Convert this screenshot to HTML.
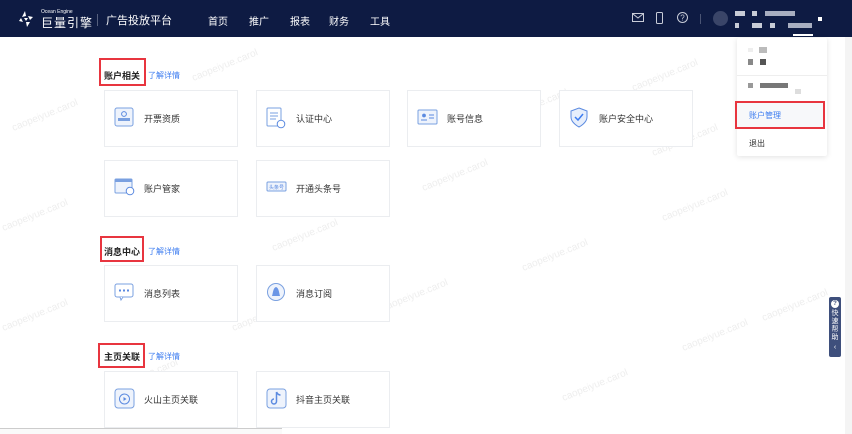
<!DOCTYPE html>
<html><head><meta charset="utf-8"><style>
*{margin:0;padding:0;box-sizing:border-box}
body{width:852px;height:434px;overflow:hidden;background:#fff;font-family:"Liberation Sans","Noto Sans CJK SC",sans-serif;position:relative;color:#333}
.hdr{position:absolute;left:0;top:0;width:852px;height:37px;background:#0e1b43}
.a{position:absolute}
.nav{color:#fff;font-size:10px;top:13px}
.card{position:absolute;width:134px;height:57px;border:1px solid #ebedf0;background:#fff}
.card .t{position:absolute;left:39px;top:21px;font-size:9px;color:#333}
.card svg{position:absolute;left:9px;top:16px}
.sec{position:absolute;font-size:9px;font-weight:bold;color:#222}
.lk{position:absolute;font-size:8px;color:#3c7cf0}
.red{position:absolute;border:2px solid #e8353f}
.wm{position:absolute;color:#eeeeee;font-size:10px;transform:rotate(-22deg);white-space:nowrap}
.blk{position:absolute;background:#999}
</style></head><body>
<div class="wm" style="left:10px;top:110px">caopeiyue.carol</div>
<div class="wm" style="left:190px;top:60px">caopeiyue.carol</div>
<div class="wm" style="left:280px;top:125px">caopeiyue.carol</div>
<div class="wm" style="left:420px;top:170px">caopeiyue.carol</div>
<div class="wm" style="left:500px;top:100px">caopeiyue.carol</div>
<div class="wm" style="left:630px;top:70px">caopeiyue.carol</div>
<div class="wm" style="left:650px;top:135px">caopeiyue.carol</div>
<div class="wm" style="left:0px;top:210px">caopeiyue.carol</div>
<div class="wm" style="left:270px;top:230px">caopeiyue.carol</div>
<div class="wm" style="left:380px;top:290px">caopeiyue.carol</div>
<div class="wm" style="left:520px;top:250px">caopeiyue.carol</div>
<div class="wm" style="left:660px;top:200px">caopeiyue.carol</div>
<div class="wm" style="left:760px;top:300px">caopeiyue.carol</div>
<div class="wm" style="left:0px;top:310px">caopeiyue.carol</div>
<div class="wm" style="left:230px;top:310px">caopeiyue.carol</div>
<div class="wm" style="left:110px;top:370px">caopeiyue.carol</div>
<div class="wm" style="left:560px;top:380px">caopeiyue.carol</div>
<div class="wm" style="left:680px;top:330px">caopeiyue.carol</div>

<div class="hdr"></div>
<svg class="a" style="left:17px;top:10px" width="18" height="18" viewBox="0 0 18 18"><path d="M8 1 L5 7 L9 6Z M16 7 L11 6 L13 10Z M10 17 L13 12 L9 12Z M2 11 L6 12 L4 8Z M7 8 L11 8 L9 11Z" fill="#fff"/></svg>
<div class="a" style="left:41px;top:9px;color:#fff;font-size:5px">Ocean Engine</div>
<div class="a" style="left:41px;top:14px;color:#fff;font-size:12px;letter-spacing:1px">巨量引擎</div>
<div class="a" style="left:97px;top:14px;width:1px;height:12px;background:#56607e"></div>
<div class="a" style="left:106px;top:12px;color:#fff;font-size:11px">广告投放平台</div>
<div class="a nav" style="left:208px">首页</div>
<div class="a nav" style="left:249px">推广</div>
<div class="a nav" style="left:290px">报表</div>
<div class="a nav" style="left:329px">财务</div>
<div class="a nav" style="left:370px">工具</div>
<svg class="a" style="left:632px;top:13px" width="12" height="10"><rect x="0.5" y="0.5" width="11" height="8" fill="none" stroke="#c8ccd8"/><path d="M1 1 L6 5 L11 1" fill="none" stroke="#c8ccd8"/></svg>
<svg class="a" style="left:656px;top:12px" width="7" height="12"><rect x="0.5" y="0.5" width="6" height="11" rx="1" fill="none" stroke="#c8ccd8"/></svg>
<svg class="a" style="left:677px;top:12px" width="11" height="11"><circle cx="5.5" cy="5.5" r="5" fill="none" stroke="#c8ccd8"/><text x="3.3" y="8.5" font-size="8" fill="#c8ccd8" font-family="Liberation Sans">?</text></svg>
<div class="a" style="left:700px;top:14px;width:1px;height:10px;background:#4a5474"></div>
<div class="a" style="left:713px;top:11px;width:15px;height:15px;border-radius:50%;background:#3a4568"></div>
<div class="blk" style="left:735px;top:11px;width:10px;height:5px;background:#c8ccd6"></div>
<div class="blk" style="left:752px;top:11px;width:5px;height:5px;background:#c8ccd6"></div>
<div class="blk" style="left:765px;top:11px;width:30px;height:5px;background:#a8aec0"></div>
<div class="blk" style="left:735px;top:23px;width:4px;height:5px;background:#c8ccd6"></div>
<div class="blk" style="left:752px;top:23px;width:10px;height:5px;background:#c8ccd6"></div>
<div class="blk" style="left:770px;top:23px;width:5px;height:5px;background:#c8ccd6"></div>
<div class="blk" style="left:788px;top:23px;width:24px;height:5px;background:#a8aec0"></div>
<div class="blk" style="left:818px;top:17px;width:4px;height:4px;background:#fff"></div>

<div class="a" style="left:845px;top:37px;width:7px;height:397px;background:#f4f4f4"></div>

<div class="sec" style="left:104px;top:69px">账户相关</div><div class="lk" style="left:148px;top:70px">了解详情</div>
<div class="red" style="left:99px;top:58px;width:47px;height:28px"></div>

<div class="card" style="left:104px;top:90px"><svg width="20" height="20"><rect x="1" y="1" width="18" height="18" rx="2" fill="#eef3fc" stroke="#7aa0e0"/><circle cx="10" cy="7" r="2.4" fill="none" stroke="#5b8ae0"/><rect x="4" y="11" width="12" height="3" fill="#7aa0e0"/></svg><div class="t">开票资质</div></div>
<div class="card" style="left:256px;top:90px"><svg width="20" height="22"><rect x="1" y="1" width="14" height="18" rx="1" fill="none" stroke="#7aa0e0"/><path d="M4 6h8M4 9h8M4 12h6" stroke="#7aa0e0"/><circle cx="15" cy="17" r="3.8" fill="#fff" stroke="#5b8ae0"/></svg><div class="t">认证中心</div></div>
<div class="card" style="left:407px;top:90px"><svg width="22" height="20"><rect x="1" y="3" width="19" height="14" rx="1" fill="#eef3fc" stroke="#7aa0e0"/><circle cx="7" cy="8.5" r="1.9" fill="#5b8ae0"/><path d="M4 13h6M12 8h5M12 11h5" stroke="#5b8ae0"/></svg><div class="t">账号信息</div></div>
<div class="card" style="left:559px;top:90px"><svg width="20" height="22"><path d="M10 1 L18 4 V10 C18 16 10 20 10 20 C10 20 2 16 2 10 V4Z" fill="#e6eefc" stroke="#5b8ae0"/><path d="M6 10 L9 13 L14 7" fill="none" stroke="#3c7cf0" stroke-width="1.5"/></svg><div class="t">账户安全中心</div></div>
<div class="card" style="left:104px;top:160px"><svg width="22" height="20"><rect x="1" y="2" width="17" height="14" rx="1" fill="#eef3fc" stroke="#7aa0e0"/><rect x="1" y="2" width="17" height="3" fill="#7aa0e0"/><circle cx="16" cy="14" r="3.8" fill="#fff" stroke="#5b8ae0"/></svg><div class="t">账户管家</div></div>
<div class="card" style="left:256px;top:160px"><svg width="22" height="20"><rect x="1" y="5" width="19" height="9" rx="1" fill="#eef3fc" stroke="#7aa0e0"/><text x="3" y="12" font-size="5" fill="#5b8ae0">头条号</text></svg><div class="t">开通头条号</div></div>

<div class="sec" style="left:104px;top:245px">消息中心</div><div class="lk" style="left:148px;top:246px">了解详情</div>
<div class="red" style="left:100px;top:236px;width:44px;height:26px"></div>
<div class="card" style="left:104px;top:265px"><svg width="22" height="22"><rect x="1" y="2" width="18" height="13" rx="2" fill="none" stroke="#7aa0e0"/><path d="M6 15 L7 18 L9 15" fill="#fff" stroke="#7aa0e0"/><path d="M5 8.5h2M9 8.5h2M13 8.5h2" stroke="#5b8ae0" stroke-width="2"/></svg><div class="t">消息列表</div></div>
<div class="card" style="left:256px;top:265px"><svg width="22" height="22"><circle cx="10" cy="10" r="8.5" fill="#eef3fc" stroke="#7aa0e0"/><path d="M6 14 C7 11 7 6 10 5 C13 6 13 11 14 14Z" fill="#6b96e6"/></svg><div class="t">消息订阅</div></div>

<div class="sec" style="left:104px;top:350px">主页关联</div><div class="lk" style="left:148px;top:351px">了解详情</div>
<div class="red" style="left:98px;top:343px;width:47px;height:25px"></div>
<div class="card" style="left:104px;top:371px"><svg width="22" height="22"><rect x="1" y="1" width="19" height="19" rx="3" fill="#eef3fc" stroke="#7aa0e0"/><circle cx="10.5" cy="11" r="5" fill="none" stroke="#5b8ae0"/><path d="M9.5 9 L12.5 11 L9.5 13Z" fill="#5b8ae0"/></svg><div class="t">火山主页关联</div></div>
<div class="card" style="left:256px;top:371px"><svg width="22" height="22"><rect x="1" y="1" width="19" height="19" rx="3" fill="#eef3fc" stroke="#7aa0e0"/><path d="M10.5 4 V13.5 A2.5 2.5 0 1 1 8 11 M10.5 4 C11.5 6 12.5 7 14.5 7" fill="none" stroke="#5b8ae0" stroke-width="1.5"/></svg><div class="t">抖音主页关联</div></div>

<div class="a" style="left:737px;top:38px;width:90px;height:118px;background:#fff;box-shadow:0 1px 6px rgba(0,0,0,.12);border-radius:2px"></div>
<div class="a" style="left:793px;top:34px;width:20px;height:2px;background:#fff"></div>
<div class="blk" style="left:748px;top:48px;width:5px;height:4px;background:#eee"></div>
<div class="blk" style="left:759px;top:47px;width:8px;height:6px;background:#bbb"></div>
<div class="blk" style="left:748px;top:59px;width:5px;height:6px;background:#888"></div>
<div class="blk" style="left:760px;top:59px;width:6px;height:6px;background:#555"></div>
<div class="a" style="left:737px;top:75px;width:90px;height:1px;background:#eee"></div>
<div class="blk" style="left:748px;top:83px;width:5px;height:5px;background:#999"></div>
<div class="blk" style="left:760px;top:83px;width:28px;height:5px;background:#777"></div>
<div class="blk" style="left:795px;top:89px;width:6px;height:5px;background:#ddd"></div>
<div class="a" style="left:737px;top:103px;width:87px;height:25px;background:#f7f8fa"></div>
<div class="red" style="left:735px;top:101px;width:90px;height:28px"></div>
<div class="a" style="left:749px;top:110px;font-size:8px;color:#3c7cf0">账户管理</div>
<div class="a" style="left:749px;top:138px;font-size:8px;color:#333">退出</div>

<div class="a" style="left:829px;top:297px;width:12px;height:60px;background:#3e4f7c;border-radius:2px"></div>
<div class="a" style="left:831px;top:300px;width:8px;height:8px;border-radius:50%;background:#fff;font-size:6px;color:#3e4f7c;text-align:center;line-height:8px;font-weight:bold">?</div>
<div class="a" style="left:830px;top:310px;width:10px;font-size:7px;color:#fff;line-height:8px;text-align:center">快速帮助</div>
<div class="a" style="left:830px;top:344px;width:10px;font-size:7px;color:#fff;text-align:center">‹</div>

<div class="a" style="left:0;top:428px;width:282px;height:6px;background:#fafafa;border-top:1px solid #ccc"></div>
</body></html>
